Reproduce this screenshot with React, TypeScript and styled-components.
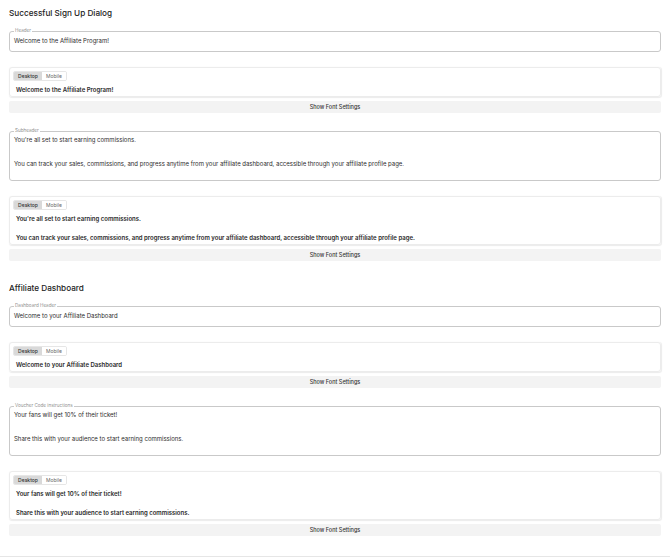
import React from "react";
import styled, { createGlobalStyle } from "styled-components";

const Global = createGlobalStyle`
  html, body { margin: 0; padding: 0; background: #fff; }
  body { font-family: Inter, "Noto Sans", "Liberation Sans", sans-serif; color: #222; }
  * { box-sizing: border-box; }
`;

const Page = styled.div`
  padding: 6px 9px 0;
  display: flex;
  flex-direction: column;
`;

const Section = styled.section<{ $first?: boolean }>`
  display: flex;
  flex-direction: column;
  margin-top: ${(p) => (p.$first ? 0 : 20)}px;
`;

const SectionTitle = styled.h2`
  margin: 0 0 8px;
  height: 14px;
  line-height: 14px;
  font-size: 8.2px;
  font-weight: 500;
  color: #222;
`;

const Group = styled.div<{ $last?: boolean }>`
  display: flex;
  flex-direction: column;
  margin-bottom: ${(p) => (p.$last ? 0 : 15)}px;
`;

const Field = styled.fieldset<{ $multi?: boolean }>`
  margin: 0;
  padding: ${(p) => (p.$multi ? "0 4px 10px" : "1px 4px 4px")};
  border: 1px solid #c9c9c9;
  border-radius: 3px;
  min-width: 0;
`;

const Legend = styled.legend`
  margin-left: 0;
  padding: 0 1px;
  height: 6px;
  line-height: 6px;
  font-size: 4.6px;
  color: #8f8f8f;
`;

const FieldText = styled.div`
  font-size: 6px;
  line-height: 12px;
  color: #2b2b2b;
  white-space: pre-wrap;
`;

const Preview = styled.div`
  margin-top: 15px;
  border: 1px solid #ececec;
  border-radius: 3px;
  box-shadow: 0.5px 0.5px 1px rgba(0, 0, 0, 0.08);
  padding: 3px 3px 2px;
  display: flex;
  flex-direction: column;
  align-items: flex-start;
`;

const Tabs = styled.div`
  display: flex;
  height: 10px;
  border: 1px solid #e6e6e6;
  border-radius: 2px;
  overflow: hidden;
`;

const Tab = styled.div<{ $active?: boolean }>`
  display: flex;
  align-items: center;
  justify-content: center;
  padding: 0 3px;
  font-size: 5px;
  font-weight: ${(p) => (p.$active ? 500 : 400)};
  color: ${(p) => (p.$active ? "#333" : "#666")};
  background: ${(p) => (p.$active ? "#d9d9d9" : "#fff")};
  width: ${(p) => (p.$active ? 28 : 24)}px;
`;

const PreviewText = styled.div`
  margin-top: 3.5px;
  padding-left: 3px;
  font-size: 6px;
  line-height: 9.5px;
  font-weight: 600;
  color: #2a2a2a;
  white-space: pre-wrap;
`;

const FontBar = styled.button`
  margin-top: 3.5px;
  height: 12.5px;
  border: none;
  border-radius: 2px;
  background: #f3f3f3;
  font-family: inherit;
  font-size: 5.5px;
  font-weight: 500;
  color: #333;
  padding: 0;
  cursor: pointer;
`;

const Divider = styled.hr`
  margin: 20px -9px 0;
  border: none;
  border-top: 1px solid #e6e6e6;
`;

type Item = { label: string; text: string; multi?: boolean };

const sections: { title: string; items: Item[] }[] = [
  {
    title: "Successful Sign Up Dialog",
    items: [
      { label: "Header", text: "Welcome to the Affiliate Program!" },
      {
        label: "Subheader",
        multi: true,
        text:
          "You're all set to start earning commissions.\n\nYou can track your sales, commissions, and progress anytime from your affiliate dashboard, accessible through your affiliate profile page.",
      },
    ],
  },
  {
    title: "Affiliate Dashboard",
    items: [
      { label: "Dashboard Header", text: "Welcome to your Affiliate Dashboard" },
      {
        label: "Voucher Code instructions",
        multi: true,
        text:
          "Your fans will get 10% of their ticket!\n\nShare this with your audience to start earning commissions.",
      },
    ],
  },
];

function FieldGroup({ item, last }: { item: Item; last: boolean }) {
  return (
    <Group $last={last}>
      <Field $multi={item.multi}>
        <Legend>{item.label}</Legend>
        <FieldText>{item.text}</FieldText>
      </Field>
      <Preview>
        <Tabs>
          <Tab $active>Desktop</Tab>
          <Tab>Mobile</Tab>
        </Tabs>
        <PreviewText>{item.text}</PreviewText>
      </Preview>
      <FontBar>Show Font Settings</FontBar>
    </Group>
  );
}

export default function App() {
  return (
    <>
      <Global />
      <Page>
        {sections.map((s, si) => (
          <Section key={s.title} $first={si === 0}>
            <SectionTitle>{s.title}</SectionTitle>
            {s.items.map((it, i) => (
              <FieldGroup key={it.label} item={it} last={i === s.items.length - 1} />
            ))}
          </Section>
        ))}
        <Divider />
      </Page>
    </>
  );
}
